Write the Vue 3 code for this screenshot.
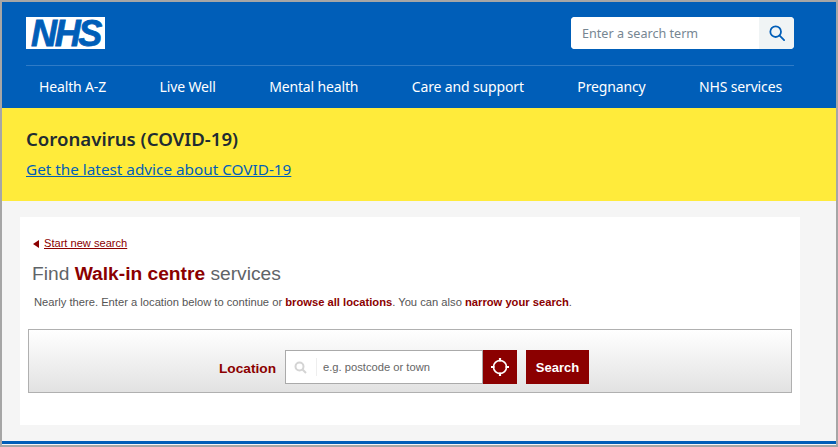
<template>
  <div class="frame">
    <header class="cabecalho">
      <div class="topo">
        <div class="logo">NHS</div>
        <form class="busca" @submit.prevent>
          <input type="text" placeholder="Enter a search term" />
          <button type="submit" aria-label="Search">
            <svg width="16" height="16" viewBox="0 0 18 18" fill="none" stroke="#005eb8" stroke-width="2">
              <circle cx="7.5" cy="7.5" r="6" />
              <path d="M12 12 L17 17" stroke-linecap="round" />
            </svg>
          </button>
        </form>
      </div>
      <nav class="menu">
        <a v-for="item in menu" :key="item" href="#">{{ item }}</a>
      </nav>
    </header>

    <section class="aviso">
      <h2>Coronavirus (COVID-19)</h2>
      <a href="#">Get the latest advice about COVID-19</a>
    </section>

    <main class="conteudo">
      <div class="cartao">
        <a class="voltar" href="#"><span class="seta"></span><span class="voltar-texto">Start new search</span></a>
        <h1>Find <strong>Walk-in centre</strong> services</h1>
        <p>
          Nearly there. Enter a location below to continue or <a href="#">browse all locations</a>.
          You can also <a href="#">narrow your search</a>.
        </p>
        <form class="painel" @submit.prevent>
          <label for="local">Location</label>
          <div class="campo">
            <svg class="lupa" width="13" height="13" viewBox="0 0 13 13" fill="none" stroke="#d4d4d4" stroke-width="2">
              <circle cx="5.5" cy="5.5" r="4" />
              <path d="M8.5 8.5 L12 12" />
            </svg>
            <span class="separador"></span>
            <input id="local" type="text" placeholder="e.g. postcode or town" />
          </div>
          <button class="alvo" type="button" aria-label="Use my location">
            <svg width="20" height="20" viewBox="0 0 20 20" fill="none" stroke="#fff" stroke-width="1.6">
              <circle cx="10" cy="10" r="6.5" />
              <path d="M10 1 V4.5 M10 15.5 V19 M1 10 H4.5 M15.5 10 H19" stroke-width="2.2" />
            </svg>
          </button>
          <button class="procurar" type="submit">Search</button>
        </form>
      </div>
    </main>
    <div class="rodape"></div>
  </div>
</template>

<script setup>
const menu = ['Health A-Z', 'Live Well', 'Mental health', 'Care and support', 'Pregnancy', 'NHS services']
</script>

<style scoped>
.frame {
  box-sizing: border-box;
  width: 838px;
  height: 447px;
  border: 2px solid #a6a6a6;
  display: flex;
  flex-direction: column;
  background: #f5f5f5;
  overflow: hidden;
}
.cabecalho { background: #005eb8; height: 106px; padding: 15px 42px 0 24px; box-sizing: border-box; }
.topo { display: flex; justify-content: space-between; height: 48px; border-bottom: 1px solid #2f7bc6; }
.logo {
  width: 79px; height: 32px; background: #fff; color: #005eb8;
  font: italic bold 36px/33px "Liberation Sans", sans-serif;
  -webkit-text-stroke: 0.8px #005eb8;
  letter-spacing: -2.4px; text-align: center;
}
.busca { display: flex; width: 223px; height: 32px; border-radius: 4px; overflow: hidden; background: #fff; }
.busca input {
  flex: 1; min-width: 0; border: none; outline: none; padding: 0 11px;
  font: 12.6px "Noto Sans", sans-serif; color: #425563;
}
.busca input::placeholder { color: #768692; opacity: 1; }
.busca button {
  width: 35px; border: none; background: #f0f4f5; padding: 0;
  display: flex; align-items: center; justify-content: center;
}
.menu { display: flex; justify-content: space-between; padding: 0 12px 0 13px; height: 41px; align-items: center; }
.menu a { color: #fff; font: 14px "Noto Sans", sans-serif; letter-spacing: -0.15px; text-decoration: none; }

.aviso { background: #ffeb3b; height: 93px; box-sizing: border-box; padding: 18px 24px 0; }
.aviso h2 { margin: 0 0 7px; font: 600 18.6px/25px "Noto Sans", sans-serif; color: #212b32; }
.aviso a { font: 15.3px/22px "Noto Sans", sans-serif; color: #005eb8; }

.conteudo { flex: 1; padding: 16px 36px 16px 18px; min-height: 0; }
.cartao {
  background: #fff; height: 208px; box-sizing: border-box; padding: 20px 8px 0 8px;
  font-family: "Liberation Sans", Arial, sans-serif;
}
.voltar { display: flex; align-items: center; gap: 5px; margin-left: 5px; font-size: 11.1px; line-height: 13px; color: #8b0000; text-decoration: none; }
.voltar-texto { text-decoration: underline; }
.seta { width: 0; height: 0; border-style: solid; border-width: 4px 6px 4px 0; border-color: transparent #8b0000 transparent transparent; }
h1 { margin: 13px 0 0 4px; font-size: 19.2px; line-height: 22px; font-weight: 400; color: #5f6468; }
h1 strong { color: #8b0000; }
p { margin: 10px 0 0 6px; font-size: 11.2px; line-height: 14px; color: #555; }
p a { color: #8b0000; font-weight: 700; text-decoration: none; }
.painel {
  margin-top: 20px; height: 64px; box-sizing: border-box;
  border: 1px solid #b0b0b0;
  background: linear-gradient(#fff, #e2e2e2);
  display: flex; align-items: flex-start; padding: 20px 0 0 190px;
}
.painel label { color: #8b0000; font-weight: 700; font-size: 13.7px; line-height: 37px; width: 66px; }
.campo {
  width: 198px; height: 34px; box-sizing: border-box; border: 1px solid #aaa; background: #fff;
  display: flex; align-items: center;
}
.lupa { margin-left: 8px; }
.separador { width: 1px; height: 18px; background: #eee; margin: 0 6px 0 9px; }
.campo input {
  flex: 1; min-width: 0; border: none; outline: none; padding: 0; background: transparent;
  font: 11.2px "Liberation Sans", sans-serif; color: #555;
}
.campo input::placeholder { color: #666; opacity: 1; }
.alvo {
  width: 34px; height: 34px; border: none; padding: 0; background: #8b0000;
  display: flex; align-items: center; justify-content: center;
}
.procurar {
  width: 63px; height: 34px; margin-left: 9px; border: none; padding: 0;
  background: #8b0000; color: #fff; font: 700 13px "Liberation Sans", sans-serif;
}
.rodape { height: 3px; background: #005eb8; margin-bottom: 1px; flex-shrink: 0; }
</style>

<style>
body { margin: 0; }
</style>
